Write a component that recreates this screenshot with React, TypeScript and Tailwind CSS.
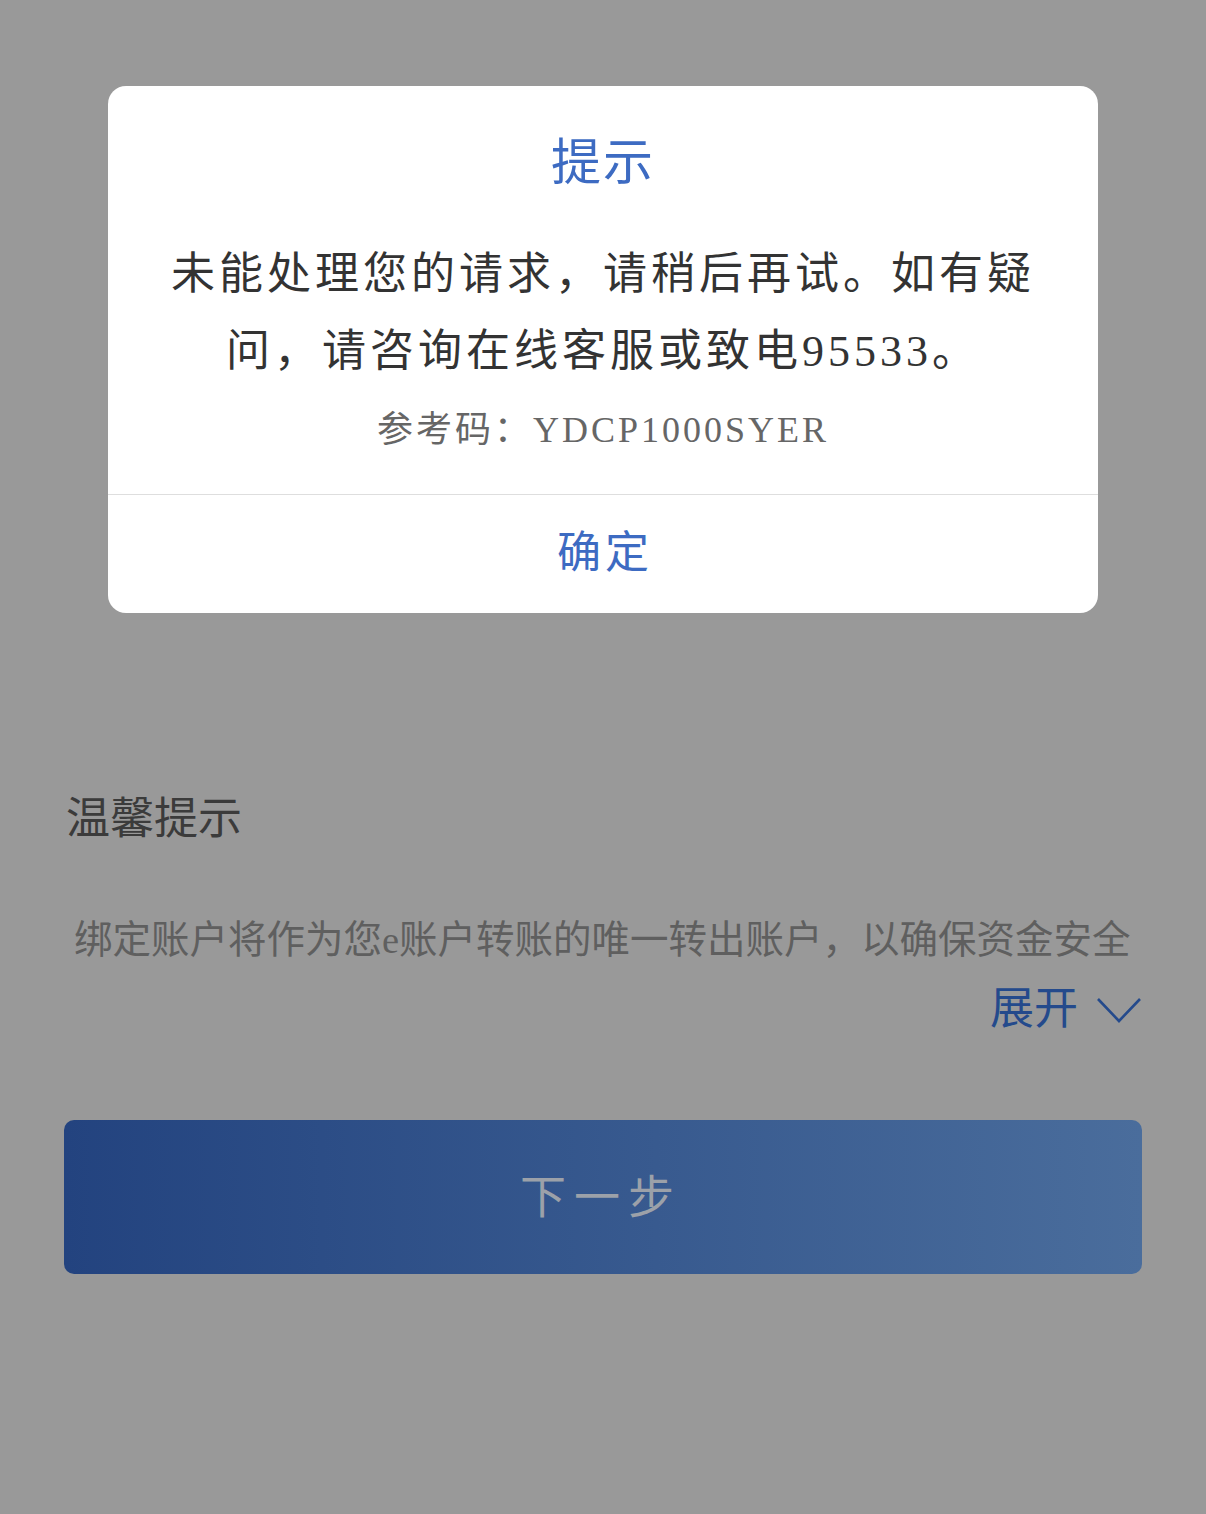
import React from 'react';

const font = { fontFamily: '"Liberation Serif", "Noto Sans CJK SC", serif' };

const App: React.FC = () => {
  return (
    <div className="relative w-[1206px] min-h-[1514px] bg-[#999999] overflow-hidden" style={font}>
      {/* Page under the overlay */}
      <div className="px-[64px] pt-[790px]">
        <div className="pl-[2px] text-[44px] leading-[60px] text-[#3b3b3b]">温馨提示</div>
        <div className="mt-[62px] pl-[10px] text-[38.5px] leading-[56px] text-[#5f5f5f] whitespace-nowrap">
          绑定账户将作为您e账户转账的唯一转出账户，以确保资金安全
        </div>
        <div className="mt-[12px] flex items-center justify-end h-[60px]">
          <span className="text-[44px] leading-[60px] text-[#244a8c]">展开</span>
          <svg className="ml-[18px]" width="46" height="28" viewBox="0 0 46 28" fill="none">
            <polyline points="2,3 23,25 44,3" stroke="#244a8c" strokeWidth="2.6" strokeLinejoin="miter" />
          </svg>
        </div>
        <button className="mt-[80px] w-full h-[154px] rounded-[10px] bg-gradient-to-r from-[#23437f] to-[#4a6d9c] flex items-center justify-center">
          <span className="text-[46px] tracking-[8px] pr-[4px] text-[#9ca1a9]">下一步</span>
        </button>
      </div>

      {/* Dialog */}
      <div className="absolute left-[108px] top-[86px] w-[990px] bg-white rounded-[18px]">
        <div className="pt-[47px] px-[56px] pb-[39px] text-center">
          <div className="text-[50px] leading-[60px] tracking-[2px] text-[#3d6bc2]">提示</div>
          <div className="mt-[43px] text-[44px] leading-[77px] tracking-[4px] text-[#333333]">
            未能处理您的请求，请稍后再试。如有疑问，请咨询在线客服或致电95533。
          </div>
          <div className="mt-[15px] text-[36px] leading-[50px] tracking-[3px] text-[#666666]">
            参考码：YDCP1000SYER
          </div>
        </div>
        <div className="border-t border-[#dedede] h-[119px] flex items-center justify-center">
          <span className="text-[44px] tracking-[4px] pl-[4px] text-[#3d6bc2]">确定</span>
        </div>
      </div>
    </div>
  );
};

export default App;
